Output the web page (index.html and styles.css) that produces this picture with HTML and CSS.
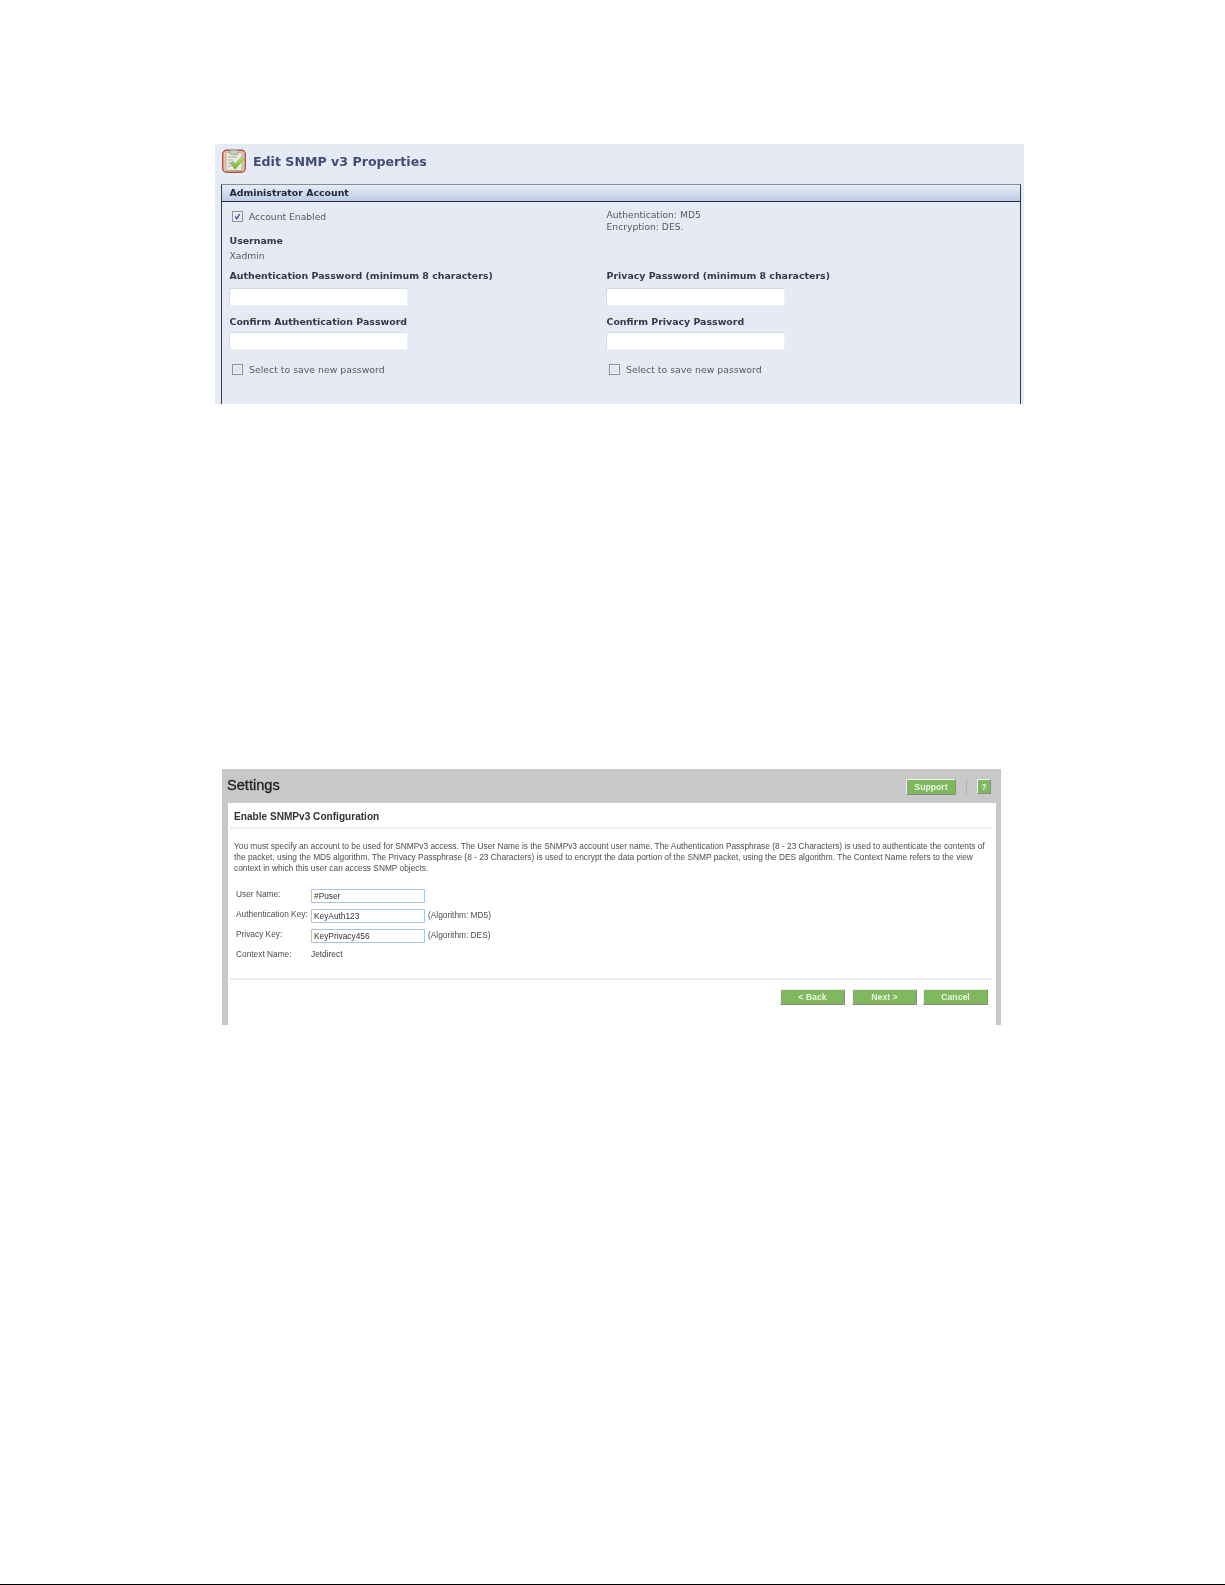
FILE: index.html
```html
<!DOCTYPE html>
<html lang="en">
<head>
<meta charset="utf-8">
<title>SNMP v3 configuration</title>
<link rel="stylesheet" href="styles.css">
</head>
<body>
<main class="doc">
  <section class="jwa">
    <header class="jwa-title">
      <svg class="jwa-icon" viewBox="0 0 24 24" width="24" height="24" aria-hidden="true">
        <defs>
          <linearGradient id="ck" x1="0" y1="0" x2="0" y2="1"><stop offset="0" stop-color="#c8e66e"/><stop offset="1" stop-color="#6cae38"/></linearGradient>
        </defs>
        <rect x="0.7" y="1.2" width="22.6" height="22" rx="4" fill="#e9c9ae" stroke="#a9563a" stroke-width="1.4"/>
        <rect x="4" y="3.5" width="16" height="18" rx="1" fill="#e8eadf" stroke="#9aa090" stroke-width=".7"/>
        <rect x="8" y="1" width="8" height="4.5" rx="1" fill="#c9ccc4" stroke="#8d9188" stroke-width=".6"/>
        <path d="M6 8h9M6 11h5M6 14h3M6 17h3" stroke="#a7ab9f" stroke-width="1"/>
        <path d="M8.4 14.2l2.6-1.8 2 2.8 6.6-7 2.2 1.8-8.8 10.2z" fill="url(#ck)" stroke="#5b9430" stroke-width=".5"/>
      </svg>
      <h1 class="jwa-heading">Edit SNMP v3 Properties</h1>
    </header>
    <div class="box">
      <h2 class="box-head">Administrator Account</h2>
      <div class="box-grid">
        <div class="col">
          <label class="check first"><span class="cb cb-on"><svg viewBox="0 0 10 10" width="9" height="9" aria-hidden="true"><path d="M2.5 5l1.8 2.4L7.5 2.2" fill="none" stroke="#3a4f8c" stroke-width="1.4"/></svg></span>Account Enabled</label>
          <div class="label user">Username</div>
          <div class="value">Xadmin</div>
          <div class="label auth">Authentication Password (minimum 8 characters)</div>
          <div class="field"></div>
          <div class="label confirm">Confirm Authentication Password</div>
          <div class="field"></div>
          <label class="check save"><span class="cb"></span>Select to save new password</label>
        </div>
        <div class="col">
          <div class="algo">Authentication: MD5<br>Encryption: DES.</div>
          <div class="label auth priv">Privacy Password (minimum 8 characters)</div>
          <div class="field"></div>
          <div class="label confirm">Confirm Privacy Password</div>
          <div class="field"></div>
          <label class="check save"><span class="cb"></span>Select to save new password</label>
        </div>
      </div>
    </div>
  </section>

  <section class="ews">
    <header class="ews-top">
      <h1 class="ews-title">Settings</h1>
      <div class="ews-tools">
        <span class="btn btn-support">Support</span>
        <span class="sep"></span>
        <span class="btn btn-help">?</span>
      </div>
    </header>
    <div class="ews-body">
      <h2 class="ews-heading">Enable SNMPv3 Configuration</h2>
      <p class="ews-text">You must specify an account to be used for SNMPv3 access. The User Name is the SNMPv3 account user name. The Authentication Passphrase (8 - 23 Characters) is used to authenticate the contents of<br>the packet, using the MD5 algorithm. The Privacy Passphrase (8 - 23 Characters) is used to encrypt the data portion of the SNMP packet, using the DES algorithm. The Context Name refers to the view<br>context in which this user can access SNMP objects.</p>
      <div class="ews-form">
        <span class="f-label">User Name:</span><span class="f-input">#Puser</span><span></span>
        <span class="f-label">Authentication Key:</span><span class="f-input">KeyAuth123</span><span class="f-note">(Algorithm: MD5)</span>
        <span class="f-label">Privacy Key:</span><span class="f-input">KeyPrivacy456</span><span class="f-note">(Algorithm: DES)</span>
        <span class="f-label">Context Name:</span><span class="f-static">Jetdirect</span><span></span>
      </div>
      <div class="ews-actions">
        <span class="btn btn-nav btn-back">&lt; Back</span>
        <span class="btn btn-nav">Next &gt;</span>
        <span class="btn btn-nav">Cancel</span>
      </div>
    </div>
  </section>
  <div class="doc-foot"></div>
</main>
</body>
</html>
```
FILE: styles.css
```css
* { box-sizing: border-box; }
html, body { margin: 0; padding: 0; background: #fff; }
.doc { height: 1585px; padding-top: 144px; display: flex; flex-direction: column; position: relative; }
.doc-foot { margin-top: auto; height: 1.5px; background: #000; }

/* first screenshot */
.jwa { margin-left: 215px; width: 809px; height: 260px; overflow: hidden; background: #e6eaf5; padding: 5px 3px 0 6px; font-family: "DejaVu Sans", Verdana, sans-serif; font-size: 9.2px; color: #555a66; filter: blur(.4px); }
.jwa-title { display: flex; align-items: center; gap: 7px; height: 24px; margin-left: 1px; margin-bottom: 11px; }
.jwa-icon { flex: none; }
.jwa-heading { margin: 0; font-size: 12.6px; font-weight: 700; color: #414e74; }
.box { border: 1px solid #333a48; border-top-color: #888c94; border-bottom: 0; height: 240px; }
.box-head { margin: 0; height: 17px; line-height: 16px; padding-left: 7.5px; font-size: 9.4px; font-weight: 700; color: #23283a; background: linear-gradient(#e8ecf7, #bccbe6); border-bottom: 1px solid #2a2f3d; }
.box-grid { display: grid; grid-template-columns: 377px 1fr; padding: 0 0 0 7.5px; }
.col { display: flex; flex-direction: column; }
.check { display: flex; align-items: center; height: 14px; }
.first { margin-top: 7px; }
.cb { width: 11px; height: 11px; margin: 0 6px 0 2.5px; border: 1px solid #8a8f98; background: #e4e6ea; box-shadow: inset 0 0 0 1px #f2f3f6; display: flex; flex: none; }
.cb-on { background: #dfe4f2; }
.label { font-weight: 700; font-size: 9.42px; color: #33384a; height: 14px; line-height: 14px; }
.user { margin-top: 11px; }
.value { height: 14px; line-height: 14px; margin-top: .5px; }
.auth { margin-top: 6.5px; }
.priv { margin-top: 37px; }
.field { width: 179px; height: 18px; margin: 4.5px 0 0 -1px; background: #fff; border: 1px solid #d5d9e4; border-radius: 2px; border-right-color: #eef0f5; border-bottom-color: #eef0f5; }
.confirm { margin-top: 9px; }
.confirm + .field { margin-top: 3.5px; }
.save { margin-top: 12.5px; font-size: 9.35px; }
.algo { margin-top: 7px; line-height: 11.5px; }

/* second screenshot */
.ews { margin: 365px 0 0 222px; width: 779px; height: 256px; overflow: hidden; background: #c8c8c8; padding: 0 5px 0 6px; font-family: "Liberation Sans", Arial, sans-serif; font-size: 8.34px; color: #4d4d4d; filter: blur(.7px); }
.ews-top { height: 34px; display: flex; align-items: center; justify-content: space-between; margin-right: 5px; }
.ews-title { margin: 0 0 3px -1px; font-size: 14.6px; font-weight: 400; color: #1e1e1e; -webkit-text-stroke: .3px #1e1e1e; }
.ews-tools { display: flex; align-items: center; gap: 10px; margin-top: 1px; }
.btn { display: flex; align-items: center; justify-content: center; background: #7fb85e; color: #eaf5e0; font-weight: 700; font-size: 8.7px; border: 1px solid #eef2ea; border-right-color: #8a8a8a; border-bottom-color: #8a8a8a; }
.btn-support { width: 50px; height: 16px; }
.btn-help { width: 14px; height: 15px; }
.sep { width: 1px; height: 14px; background: #b0b0b0; }
.ews-body { background: #fff; height: 222px; padding: 0 4px 0 2px; }
.ews-heading { margin: 0; height: 26px; line-height: 27px; padding-left: 4px; font-size: 10.1px; font-weight: 700; color: #333; border-bottom: 2px solid #eee; }
.ews-text { margin: 12px 0 0 4px; line-height: 11.2px; white-space: nowrap; }
.ews-form { display: grid; grid-template-columns: 75px 114px 1fr; grid-auto-rows: 14px; row-gap: 6px; align-items: start; margin: 14px 0 0 6px; }
.f-label { line-height: 10px; }
.f-input { height: 14px; line-height: 13px; padding-left: 2px; border: 1px solid #a9c6e4; background: #fff; color: #333; }
.f-static { color: #444; line-height: 10px; }
.f-note { padding-left: 3px; line-height: 12px; }
.ews-actions { margin-top: 15px; height: 27px; border-top: 2px solid #eee; padding: 9px 4px 0 0; display: flex; justify-content: flex-end; gap: 6px; }
.btn-nav { width: 65px; height: 16px; }
.btn-back { margin-right: 1px; }
```
